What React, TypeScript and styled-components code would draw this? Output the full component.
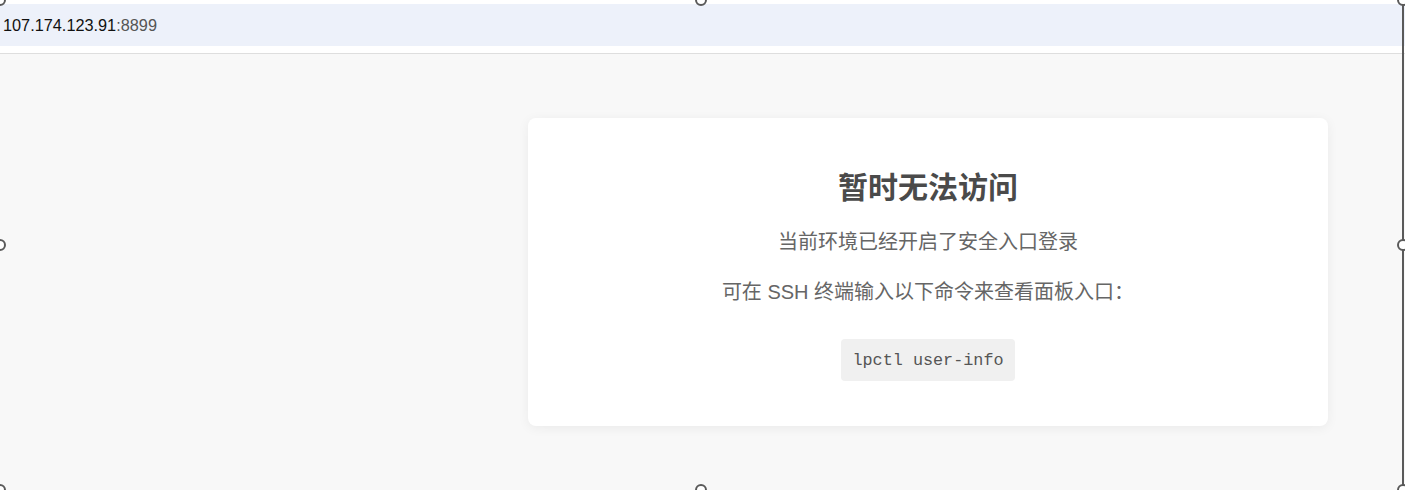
import styled, {createGlobalStyle} from 'styled-components';

const GlobalStyle = createGlobalStyle`
  html, body {
    margin: 0;
    padding: 0;
    background: #f8f8f8;
  }
  body {
    font-family: "Liberation Sans", "Noto Sans CJK SC", sans-serif;
    overflow: hidden;
  }
`;

const handles = [
    {x: 0, y: 0}, {x: 701, y: 0}, {x: 1403, y: 0},
    {x: 0, y: 245}, {x: 1403, y: 245},
    {x: 0, y: 490}, {x: 701, y: 490}, {x: 1403, y: 490},
];

const App = () => {
    return <Screen>
        <GlobalStyle/>
        <TopGap/>
        <AddressBar>
            <Host>107.174.123.91</Host><Port>:8899</Port>
        </AddressBar>
        <BarBottom/>

        <Page>
            <Card>
                <Title>暂时无法访问</Title>
                <Message $gap={22}>当前环境已经开启了安全入口登录</Message>
                <Message $gap={22}>可在 SSH 终端输入以下命令来查看面板入口：</Message>
                <Command>lpctl user-info</Command>
            </Card>
        </Page>

        <FrameLine/>
        {handles.map((h, i) =>
            <Handle key={i} style={{left: h.x - 6, top: h.y - 6}}/>
        )}
    </Screen>;
};

export default App;


const Screen = styled.div`
  position: relative;
  width: 1405px;
  height: 490px;
  overflow: hidden;
  display: flex;
  flex-direction: column;
  background: #f8f8f8;
`;

const TopGap = styled.div`
  height: 4px;
  background: #fff;
`;

const AddressBar = styled.div`
  height: 42px;
  background: #edf1fa;
  display: flex;
  align-items: center;
  padding-left: 3px;
  font-size: 16.3px;
  font-family: "Liberation Sans", "Noto Sans", sans-serif;
`;

const Host = styled.span`
  color: #111;
`;

const Port = styled.span`
  color: #555;
`;

const BarBottom = styled.div`
  height: 7px;
  background: #fff;
  border-bottom: 1px solid #dedede;
`;

const Page = styled.div`
  flex: 1;
  padding: 64px 0 0 528px;
`;

const Card = styled.div`
  width: 800px;
  height: 308px;
  box-sizing: border-box;
  background: #fff;
  border-radius: 8px;
  box-shadow: 0 2px 12px rgba(0, 0, 0, 0.06);
  display: flex;
  flex-direction: column;
  align-items: center;
  padding-top: 52px;
`;

const Title = styled.h1`
  margin: 0;
  font-size: 30px;
  line-height: 36px;
  font-weight: 700;
  color: #4a4a4a;
`;

const Message = styled.p<{$gap?: number}>`
  margin: ${p => p.$gap ?? 24}px 0 0;
  font-size: 20px;
  line-height: 28px;
  color: #666;
`;

const Command = styled.code`
  margin-top: 33px;
  padding: 0 11px;
  height: 42px;
  display: flex;
  align-items: center;
  background: #f0f0f0;
  border-radius: 4px;
  font-family: "Liberation Mono", "DejaVu Sans Mono", monospace;
  font-size: 16.8px;
  color: #555;
`;

const FrameLine = styled.div`
  position: absolute;
  top: 0;
  bottom: 0;
  left: 1402px;
  width: 2px;
  background: #5a5a5a;
`;

const Handle = styled.div`
  position: absolute;
  width: 12px;
  height: 12px;
  box-sizing: border-box;
  border: 2px solid #5a5a5a;
  border-radius: 50%;
  background: #fff;
`;
